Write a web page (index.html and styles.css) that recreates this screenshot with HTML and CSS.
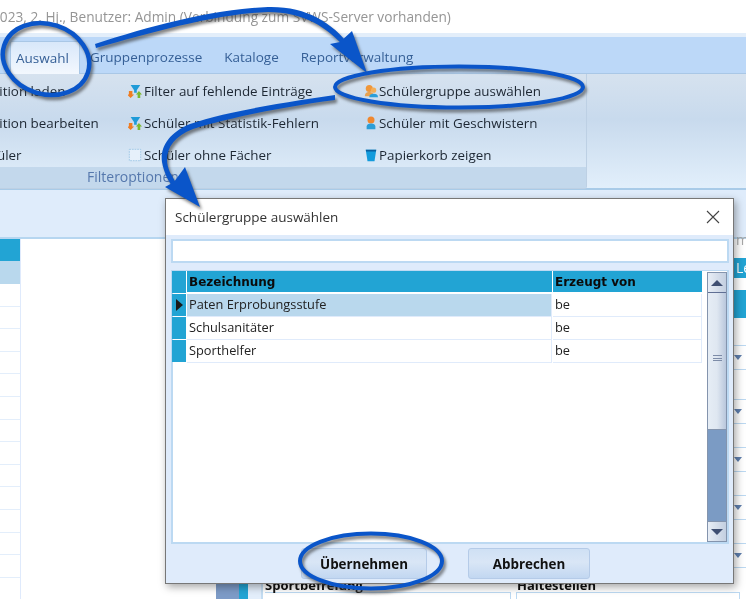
FILE: index.html
```html
<!DOCTYPE html>
<html lang="de">
<head>
<meta charset="utf-8">
<title>Schülergruppe auswählen</title>
<link rel="stylesheet" href="styles.css">
</head>
<body>
<div class="app">
  <header class="titlebar"><span class="titletext">2023, 2. Hj., Benutzer: Admin (Verbindung zum SVWS-Server vorhanden)</span></header>
  <nav class="tabstrip">
    <span class="tab tab-active">Auswahl</span>
    <span class="tab">Gruppenprozesse</span>
    <span class="tab">Kataloge</span>
    <span class="tab">Reportverwaltung</span>
  </nav>
  <section class="ribbon">
    <div class="group">
      <div class="group-cols">
        <div class="col col-clip">
          <div class="cmd">Definition laden</div>
          <div class="cmd">Definition bearbeiten</div>
          <div class="cmd cmd-short">Schüler</div>
        </div>
        <div class="col col-two">
          <div class="cmd">
            <svg class="ico" viewBox="0 0 16 16"><path d="M3 1h11L10 7v3H7V7z" fill="#1f9bd8"/><path d="M1 8h4v4h2l-4 4-4-4h2z" fill="#ef7d22"/><path d="M11 16v-4H9l3.500-4 3.500 4h-2v4z" fill="#7cb82f"/></svg>
            Filter auf fehlende Einträge</div>
          <div class="cmd">
            <svg class="ico" viewBox="0 0 16 16"><path d="M3 1h11L10 7v3H7V7z" fill="#1f9bd8"/><path d="M1 8h4v4h2l-4 4-4-4h2z" fill="#ef7d22"/><path d="M11 16v-4H9l3.500-4 3.500 4h-2v4z" fill="#7cb82f"/></svg>
            Schüler mit Statistik-Fehlern</div>
          <div class="cmd">
            <svg class="ico" viewBox="0 0 16 16"><rect x="1.500" y="1.500" width="13" height="13" fill="#e6f0fa" stroke="#9cc6e6" stroke-dasharray="2 1"/></svg>
            Schüler ohne Fächer</div>
        </div>
        <div class="col col-three">
          <div class="cmd">
            <svg class="ico" viewBox="0 0 16 16"><circle cx="6" cy="5" r="4" fill="#f0973a"/><path d="M1 14c0-4 2-5 5-5s5 1 5 5z" fill="#e9a24f"/><circle cx="11" cy="7" r="3" fill="#f4ae57"/><path d="M6 15c0-3 2-4 5-4s5 1 5 4z" fill="#2b9ed8"/></svg>
            Schülergruppe auswählen</div>
          <div class="cmd">
            <svg class="ico" viewBox="0 0 16 16"><circle cx="8" cy="4.500" r="4" fill="#f0872e"/><path d="M3 15v-3c0-2.500 2-3.500 5-3.500s5 1 5 3.500v3z" fill="#2b9ed8"/></svg>
            Schüler mit Geschwistern</div>
          <div class="cmd">
            <svg class="ico" viewBox="0 0 16 16"><path d="M2 2h12l-2 13H4z" fill="#139bdc"/><path d="M2 2h12l-.400 2H2.400z" fill="#0b5f9e"/></svg>
            Papierkorb zeigen</div>
        </div>
      </div>
      <div class="group-label">Filteroptionen</div>
    </div>
  </section>
  <div class="subbar"></div>
  <main class="content">
    <div class="list">
      <div class="list-head"></div>
      <div class="list-sel"></div>
      <div class="list-row"></div><div class="list-row"></div><div class="list-row"></div><div class="list-row"></div>
      <div class="list-row"></div><div class="list-row"></div><div class="list-row"></div><div class="list-row"></div>
      <div class="list-row"></div><div class="list-row"></div><div class="list-row"></div><div class="list-row"></div>
      <div class="list-row"></div><div class="list-row"></div>
    </div>
    <div class="detail">
      <div class="strip-a"></div>
      <div class="strip-b"></div>
      <div class="strip-c"></div>
      <div class="form">
        <div class="rail">
          <div class="rail-text">m</div>
          <div class="rail-head">Le</div>
          <div class="rail-band"></div>
          <div class="field field-first"><i class="caret"></i></div>
          <div class="field"><i class="caret"></i></div>
          <div class="field"><i class="caret"></i></div>
          <div class="field"><i class="caret"></i></div>
          <div class="field"><i class="caret"></i></div>
        </div>
        <div class="pair">
          <div class="pair-cell"><b class="pair-label">Sportbefreiung</b><div class="pair-input"></div></div>
          <div class="pair-cell"><b class="pair-label">Haltestellen</b><div class="pair-input"></div></div>
        </div>
      </div>
    </div>
  </main>
</div>

<div class="dialog">
  <div class="dlg-title">
    <span>Schülergruppe auswählen</span>
    <svg class="dlg-close" viewBox="0 0 14 14"><path d="M1 1l12 12M13 1L1 13" stroke="#444" stroke-width="1.100" fill="none"/></svg>
  </div>
  <div class="dlg-body">
    <div class="search"></div>
    <div class="gridbox">
      <div class="grid">
        <div class="gh gi"></div><div class="gh">Bezeichnung</div><div class="gh">Erzeugt von</div>
        <div class="gi gi-cur"><svg class="cur" viewBox="0 0 7 12"><path d="M0 0l7 6-7 6z" fill="#1a1a1a"/></svg></div><div class="gc gc-sel">Paten Erprobungsstufe</div><div class="gc">be</div>
        <div class="gi"></div><div class="gc">Schulsanitäter</div><div class="gc">be</div>
        <div class="gi"></div><div class="gc">Sporthelfer</div><div class="gc">be</div>
      </div>
      <div class="scroll">
        <div class="sbtn"><svg viewBox="0 0 12 6" class="sarrow"><path d="M0 6l6-6 6 6z" fill="#3f4f72"/></svg></div>
        <div class="thumb"><i class="grip"></i></div>
        <div class="track"></div>
        <div class="sbtn sbtn-down"><svg viewBox="0 0 12 6" class="sarrow"><path d="M0 0l6 6 6-6z" fill="#3f4f72"/></svg></div>
      </div>
    </div>
    <div class="dlg-foot">
      <button class="btn btn-ok">Übernehmen</button>
      <button class="btn btn-cancel">Abbrechen</button>
    </div>
  </div>
</div>

<svg class="marks" viewBox="0 0 746 599" width="746" height="599">
  <ellipse cx="46" cy="59" rx="44" ry="35" transform="rotate(18 46 59)" fill="none" stroke="#0a55c9" stroke-width="4.500"/>
  <ellipse cx="459" cy="87" rx="124" ry="20.500" fill="none" stroke="#0a55c9" stroke-width="4"/>
  <ellipse cx="371" cy="561" rx="71" ry="27.500" fill="none" stroke="#0a55c9" stroke-width="4"/>
  <path d="M95 44C150 26 215 9 268 7C305 6 332 22 350 46L346 49C328 27 303 12 268 12C215 14 150 33 96 48z" fill="#0a55c9"/>
  <path d="M367 73L330 44L340 42L352 31z" fill="#0a55c9"/>
  <path d="M335 95C280 103 225 112 190 124C168 133 160 148 162 162C164 173 168 180 172 186L177 184C171 175 167 168 167 160C167 147 175 136 193 129C228 118 282 107 335 100z" fill="#0a55c9"/>
  <path d="M200 207L165 187L174 182L185 167z" fill="#0a55c9"/>
</svg>
</body>
</html>
```
FILE: styles.css
```css
* { box-sizing: border-box; }
html, body { margin: 0; padding: 0; }
body {
  width: 746px;
  height: 599px;
  overflow: hidden;
  position: relative;
  background: #fff;
  font-family: "Open Sans", "Noto Sans", sans-serif;
  font-size: 13px;
  color: #222;
  filter: blur(.35px);
}
.app { display: flex; flex-direction: column; height: 599px; overflow: hidden; }

.titlebar { height: 33px; flex: none; display: flex; align-items: center; overflow: hidden; background: #fff; }
.titletext { margin-left: -8px; font-size: 13.700px; color: #959595; white-space: nowrap; }

.tabstrip {
  height: 41px; flex: none; display: flex; align-items: flex-end; gap: 22px; padding-left: 10px;
  background: #bcd8f8; border-top: 4px solid #e3eefa; border-bottom: 1px solid #a9c7e6;
  color: #355f96; font-size: 13.500px;
}
.tab { height: 32px; line-height: 33px; padding: 0; white-space: nowrap; }
.tab-active {
  width: 70px; padding-left: 5px; margin-right: -12px; margin-bottom: -1px; height: 33px;
  background: linear-gradient(#d8e8fa, #f3f8fe); border: 1px solid #a9c7e6; border-bottom: 0; border-radius: 2px 2px 0 0;
}

.ribbon { height: 116px; flex: none; background: linear-gradient(#d6e2ef, #c8daed 40%, #e2effb); border-bottom: 2px solid #a9cbe8; }
.group {
  width: 587px; height: 115px; display: flex; flex-direction: column;
  border-right: 1px solid #bdd0e4; border-bottom: 1px solid #bdd0e4; border-radius: 0 0 3px 0;
}
.group-cols { height: 93px; display: flex; overflow: hidden; }
.col { display: flex; flex-direction: column; padding-top: 1px; }
.col-clip { width: 127px; margin-left: -34px; flex: none; }
.col-two { width: 236px; flex: none; margin-left: 35px; }
.col-three { flex: 1; }
.cmd { height: 32px; flex: none; display: flex; align-items: center; gap: 2px; white-space: nowrap; font-size: 13.400px; color: #1d2733; }
.col-three .cmd { gap: 1px; }
.cmd-short { margin-left: 9px; }
.ico { width: 14px; height: 14px; flex: none; }
.group-label { height: 21px; line-height: 20px; background: #c3d8ec; color: #5578ad; font-size: 14px; padding-left: 87px; }

.subbar { height: 49px; flex: none; background: #dfecfb; border-bottom: 2px solid #b6d6f0; }

.content { flex: 1; display: flex; min-height: 0; background: #fff; }
.list { width: 21px; flex: none; border-right: 1px solid #dfeafc; }
.list-head { height: 22px; background: #22a4d4; }
.list-sel { height: 23px; background: #b9d8ed; }
.list-row { height: 22.600px; border-bottom: 1px solid #e3eefb; }

.detail { flex: 1; margin-left: 195px; display: flex; min-width: 0; }
.strip-a { width: 23px; flex: none; background: #7d9bc7; }
.strip-b { width: 9px; flex: none; background: #22a4d4; }
.strip-c { width: 15px; flex: none; background: #e3eefb; border-right: 2px solid #c4ddf2; margin-right: 2px; }
.form { flex: 1; min-width: 0; display: flex; flex-direction: column; justify-content: flex-end; }

.rail { width: 12px; margin-left: auto; display: flex; flex-direction: column; flex: none; font-size: 14px; color: #fff; overflow: hidden; height: 346px; }
.rail-text { height: 25px; flex: none; line-height: 15px; color: #a8a8a8; padding-left: 2px; margin-bottom: 1px; }
.rail-head { height: 20px; flex: none; line-height: 20px; background: #22a4d4; padding-left: 2px; margin-bottom: 12px; }
.rail-band { height: 28px; background: #22a4d4; flex: none; }
.field { height: 25px; flex: none; border-top: 1px solid #bcd9f2; border-bottom: 1px solid #bcd9f2; margin-bottom: 23px; }
.field-first { margin-top: 27px; margin-bottom: 29px; }
.caret { display: block; width: 0; height: 0; margin: 9px 0 0 0; border: 4px solid transparent; border-top: 5px solid #5f7fae; border-bottom: 0; }

.pair { display: grid; grid-template-columns: 252px 1fr; flex: none; height: 21px; overflow: hidden; }
.pair-cell { min-width: 0; }
.pair-label { display: block; height: 14px; line-height: 15px; font-size: 13px; color: #111; white-space: nowrap; }
.pair-input { height: 12px; margin-right: 6px; margin-left: -1px; border: 1px solid #bcd9f2; border-bottom: 0; }

.dialog {
  position: absolute; left: 165px; top: 198px; width: 569px; height: 386px;
  display: flex; flex-direction: column;
  border: 1px solid #777; background: #dfebfb;
  box-shadow: 2px 3px 8px rgba(0, 0, 0, .35);
}
.dlg-title { height: 36px; flex: none; background: #fff; display: flex; align-items: center; justify-content: space-between; padding: 0 13px 0 9px; font-size: 13.500px; color: #333; }
.dlg-close { width: 14px; height: 14px; }
.dlg-body { flex: 1; display: flex; flex-direction: column; padding: 4px 4px 0 5px; min-height: 0; }
.search { height: 24px; flex: none; background: #fff; border: 2px solid #bcd9f2; margin-bottom: 7px; }
.gridbox { height: 274px; flex: none; background: #fff; border: 2px solid #bcd9f2; border-top-width: 1px; display: flex; justify-content: space-between; }
.grid { width: 530px; display: grid; grid-template-columns: 14px 365px 149px; grid-auto-rows: 23px; column-gap: 1px; align-content: start; font-size: 12.800px; color: #222; margin-left: -1px; }
.gh { background: #22a4d4; height: 21px; font: bold 12px/23px "DejaVu Sans", sans-serif; color: #0b0b0b; padding-left: 2px; white-space: nowrap; }
.gi { background: #22a4d4; height: 22px; display: flex; align-items: center; justify-content: center; }
.gh.gi { padding: 0; }
.cur { width: 7px; height: 12px; }
.gc { height: 23px; line-height: 21px; padding-left: 2px; border-bottom: 1px solid #e0ebfb; border-right: 1px solid #e0ebfb; white-space: nowrap; }
.gc-sel { background: #b9d8ed; }
.scroll { width: 20px; display: flex; flex-direction: column; margin: 1px 0 0; flex: none; border: 1px solid #8494ad; }
.sbtn { height: 20px; flex: none; background: linear-gradient(90deg, #e8eef6, #c3cfe0); border-bottom: 1px solid #5f6f94; display: flex; align-items: center; justify-content: center; }
.sbtn-down { border-top: 1px solid #8494ad; border-bottom: 0; }
.sarrow { width: 12px; height: 6px; }
.thumb { height: 137px; flex: none; background: linear-gradient(90deg, #e6edf5, #dfe7f1 50%, #b9c7dc); border-bottom: 1px solid #8494ad; display: flex; justify-content: center; align-items: center; }
.grip { display: block; width: 9px; height: 8px; margin-top: -4px; background: repeating-linear-gradient(#7d8ca8 0 1px, transparent 1px 2.500px); }
.track { flex: 1; background: #7b9bc4; }
.dlg-foot { flex: 1; display: flex; align-items: center; padding: 0 0 0 130px; }
.btn { height: 31px; border: 1px solid #b5cbe8; border-radius: 3px; background: linear-gradient(#cfe0f4, #d9e6f6 45%, #c2d7f1); font: bold 13.400px "Open Sans", "Noto Sans", sans-serif; color: #111; padding: 0; }
.btn-ok { width: 126px; }
.btn-cancel { width: 122px; margin-left: 41px; }

.marks { position: absolute; left: 0; top: 0; pointer-events: none; filter: drop-shadow(2px 3px 1.500px rgba(50, 50, 50, .6)); }
```
